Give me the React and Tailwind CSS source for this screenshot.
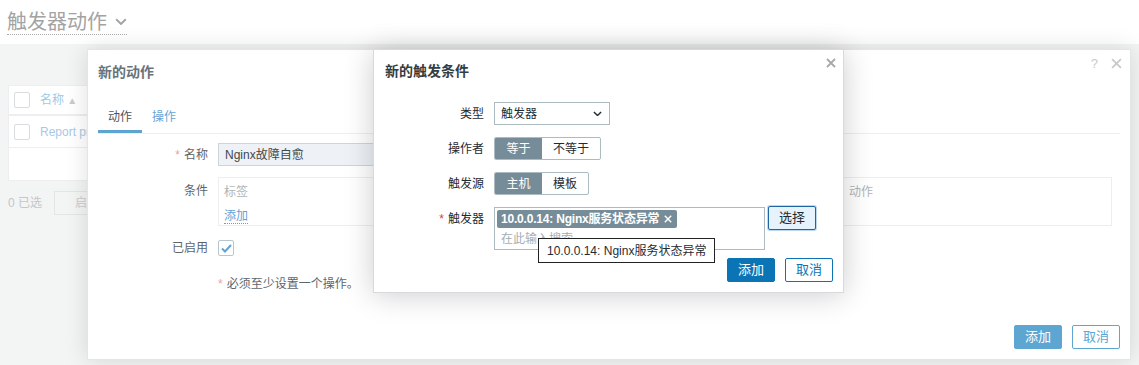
import React from "react";

const FONT = { fontFamily: '"Liberation Sans", Arial, "Noto Sans CJK SC", sans-serif' };

function Check() {
  return (
    <svg width="11" height="9" viewBox="0 0 11 9" fill="none">
      <path d="M1 4.5 L4 7.5 L10 1" stroke="#5fa3d6" strokeWidth="2" />
    </svg>
  );
}

function Chevron({ color = "#1f2c33", w = 10 }) {
  return (
    <svg width={w} height={w * 0.6} viewBox="0 0 10 6" fill="none">
      <path d="M1 1 L5 5 L9 1" stroke={color} strokeWidth="1.6" />
    </svg>
  );
}

function Cross({ color, size = 10, sw = 1.8 }) {
  return (
    <svg width={size} height={size} viewBox="0 0 10 10" fill="none">
      <path d="M1 1 L9 9 M9 1 L1 9" stroke={color} strokeWidth={sw} />
    </svg>
  );
}

export default function App() {
  return (
    <div className="relative w-[1139px] h-[365px] overflow-hidden bg-[#f3f4f4] text-[12px]" style={FONT}>
      {/* backdrop page */}
      <div className="h-[44px] bg-white flex items-center px-[7px]">
        <div className="flex items-center gap-[8px] border-b border-dotted border-[#aaaaaa] leading-[24px] text-[20px] text-[#a3a3a3]">
          <span>触发器动作</span>
          <Chevron color="#a3a3a3" w={12} />
        </div>
      </div>
      <div className="px-[8px] pt-[41px]">
        <div className="bg-white border border-[#eceeef]">
          <div className="h-[30px] flex items-center border-b-2 border-[#eceeef] px-[5px] gap-[10px]">
            <div className="w-[16px] h-[16px] border border-[#dadddf] rounded-[2px]" />
            <span className="text-[#9fc9e5]">名称 <span className="text-[10px] text-[#c8cbcd]">▲</span></span>
          </div>
          <div className="h-[32px] flex items-center border-b border-[#eceeef] px-[5px] gap-[10px]">
            <div className="w-[16px] h-[16px] border border-[#dadddf] rounded-[2px]" />
            <span className="text-[#a8c9e6]">Report problems to Zabbix administrators</span>
          </div>
          <div className="h-[32px]" />
        </div>
        <div className="flex items-center gap-[12px] mt-[10px] text-[#c3c7c9]">
          <span>0 已选</span>
          <div className="h-[24px] px-[20px] border border-[#e3e5e6] flex items-center text-[#cacdcf]">启用</div>
        </div>
      </div>

      {/* first dialog */}
      <div className="absolute left-[87px] top-[49px] w-[1044px] h-[311px] bg-white border border-[#e3e6e7] shadow-[0_0_22px_rgba(0,0,0,0.13)]">
        <div className="px-[10px] pt-[13px] leading-[18px] text-[14px] font-bold text-[#68737a]">新的动作</div>
        <div className="absolute right-[8px] top-[4px] flex items-center gap-[13px] text-[#c5cacd]">
          <span className="text-[13px]">?</span>
          <Cross color="#c5cacd" size={11} sw={1.6} />
        </div>
        <div className="mx-[10px] mt-[21px] flex border-b border-[#eceeef]">
          <div className="h-[31px] px-[10px] flex items-center text-[#4f5559] border-b-[3px] border-[#5ea4d2] pt-[2px]">动作</div>
          <div className="h-[31px] px-[10px] flex items-center text-[#64a6d6] pb-[1px]">操作</div>
        </div>
        <div className="px-[10px] pt-[9px]">
          <div className="flex items-center">
            <div className="w-[110px] text-right text-[#5d656a]"><span className="text-[#f0a0a0] mr-[4px]">*</span>名称</div>
            <div className="ml-[10px] w-[300px] h-[23px] bg-[#eef2f7] border border-[#cdd5dc] flex items-center px-[6px] text-[#3f474c]">Nginx故障自愈</div>
          </div>
          <div className="flex mt-[11px]">
            <div className="w-[110px] text-right text-[#5d656a] pt-[5px]">条件</div>
            <div className="ml-[10px] w-[894px] h-[49px] border border-[#eceeef] px-[5px] pt-[5px]">
              <div className="flex text-[#b1b4b6]">
                <span>标签</span>
                <span className="ml-[601px]">动作</span>
              </div>
              <div className="mt-[6px]"><span className="text-[#5fa3d6] border-b border-dotted border-[#5fa3d6]">添加</span></div>
            </div>
          </div>
          <div className="flex items-center mt-[13px]">
            <div className="w-[110px] text-right text-[#5d656a]">已启用</div>
            <div className="ml-[10px] w-[16px] h-[16px] border border-[#b7c5cd] rounded-[2px] flex items-center justify-center"><Check /></div>
          </div>
          <div className="ml-[120px] mt-[18px] text-[#5d656a]"><span className="text-[#f0a0a0] mr-[4px]">*</span>必须至少设置一个操作。</div>
        </div>
        <div className="absolute right-[10px] bottom-[10px] flex gap-[10px]">
          <div className="w-[48px] h-[24px] bg-[#5da6d2] border border-[#5da6d2] rounded-[2px] text-white flex items-center justify-center text-[13px]">添加</div>
          <div className="w-[48px] h-[24px] bg-white border border-[#5da6d2] rounded-[2px] text-[#5da6d2] flex items-center justify-center text-[13px]">取消</div>
        </div>
      </div>

      {/* second dialog */}
      <div className="absolute left-[373px] top-[49px] w-[471px] h-[244px] bg-white border border-[#d6dadc] shadow-[0_2px_28px_rgba(0,0,0,0.2)] text-[#1f2c33]">
        <div className="px-[11px] pt-[12px] leading-[18px] text-[14px] font-bold text-[#333d44]">新的触发条件</div>
        <div className="absolute right-[7px] top-[8px]"><Cross color="#a3aaae" size={10} sw={1.8} /></div>
        <div className="mt-[22px] flex flex-col gap-[12px]">
          <div className="flex items-center">
            <div className="w-[110px] text-right">类型</div>
            <div className="ml-[10px] w-[116px] h-[23px] border border-[#acbbc2] flex items-center justify-between px-[6px] pr-[7px]">
              <span>触发器</span>
              <Chevron color="#1f2c33" w={9} />
            </div>
          </div>
          <div className="flex items-center">
            <div className="w-[110px] text-right">操作者</div>
            <div className="ml-[10px] flex h-[23px] border border-[#acbbc2] rounded-[2px] overflow-hidden">
              <div className="w-[47px] bg-[#768d99] text-white flex items-center justify-center">等于</div>
              <div className="w-[58px] flex items-center justify-center">不等于</div>
            </div>
          </div>
          <div className="flex items-center">
            <div className="w-[110px] text-right">触发源</div>
            <div className="ml-[10px] flex h-[23px] border border-[#acbbc2] rounded-[2px] overflow-hidden">
              <div className="w-[47px] bg-[#768d99] text-white flex items-center justify-center">主机</div>
              <div className="w-[46px] flex items-center justify-center">模板</div>
            </div>
          </div>
          <div className="flex items-start">
            <div className="w-[110px] text-right pt-[3px]"><span className="text-[#e33734] mr-[4px]">*</span>触发器</div>
            <div className="ml-[10px] w-[271px] h-[43px] border border-[#acbbc2] pl-[2px] pt-[2px]">
              <div className="inline-flex items-center h-[18px] bg-[#768d99] text-white font-bold pl-[4px] pr-[5px] gap-[5px] rounded-[2px]">
                <span className="tracking-[-0.2px]">10.0.0.14: Nginx服务状态异常</span>
                <Cross color="#ffffff" size={8} sw={1.8} />
              </div>
              <div className="pl-[4px] mt-[2px] text-[#a6aeb2]">在此输入搜索</div>
            </div>
            <div className="ml-[3px] -mt-[1px] w-[48px] h-[24px] bg-[#e6f2fc] border border-[#1f65a6] rounded-[2px] shadow-[0_0_0_1px_#bcd8ee] flex items-center justify-center text-[13px]">选择</div>
          </div>
        </div>
        <div className="absolute right-[10px] bottom-[10px] flex gap-[10px]">
          <div className="w-[48px] h-[24px] bg-[#0b74b4] border border-[#0b74b4] rounded-[2px] text-white flex items-center justify-center text-[13px]">添加</div>
          <div className="w-[48px] h-[24px] bg-white border border-[#0b74b4] rounded-[2px] text-[#0b74b4] flex items-center justify-center text-[13px]">取消</div>
        </div>
      </div>

      {/* tooltip */}
      <div className="absolute left-[538px] top-[238px] h-[25px] px-[8px] bg-white border border-[#222] flex items-center text-[#1f2c33]">
        10.0.0.14: Nginx服务状态异常
      </div>
    </div>
  );
}
